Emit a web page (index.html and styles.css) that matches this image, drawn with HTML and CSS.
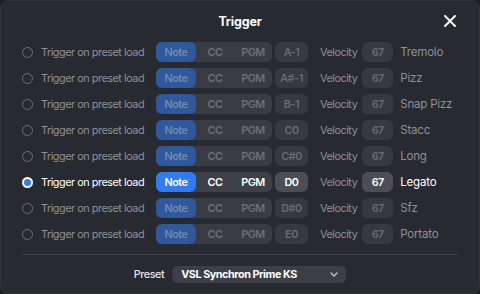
FILE: index.html
```
<!DOCTYPE html>
<html lang="en">
<head>
  <meta charset="UTF-8">
  <meta name="viewport" content="width=device-width, initial-scale=1.0">
  <title>Trigger</title>
  <link rel="stylesheet" href="styles.css">
</head>
<body>
  <div class="dialog">
    <div class="head">
      <h2>Trigger</h2>
      <button class="close" aria-label="Close">
        <svg width="12" height="12" viewBox="0 0 12 12"><path d="M1 1L11 11M11 1L1 11" stroke="#fff" stroke-width="1.9" stroke-linecap="round"/></svg>
      </button>
    </div>

    <div class="rows">
      <div class="row">
        <label class="check"><span class="radio"></span>Trigger on preset load</label>
        <div class="seg"><span class="on">Note</span><span>CC</span><span>PGM</span></div>
        <span class="box note">A-1</span>
        <span class="vel">Velocity</span>
        <span class="box num">67</span>
        <span class="name">Tremolo</span>
      </div>
      <div class="row">
        <label class="check"><span class="radio"></span>Trigger on preset load</label>
        <div class="seg"><span class="on">Note</span><span>CC</span><span>PGM</span></div>
        <span class="box note">A#-1</span>
        <span class="vel">Velocity</span>
        <span class="box num">67</span>
        <span class="name">Pizz</span>
      </div>
      <div class="row">
        <label class="check"><span class="radio"></span>Trigger on preset load</label>
        <div class="seg"><span class="on">Note</span><span>CC</span><span>PGM</span></div>
        <span class="box note">B-1</span>
        <span class="vel">Velocity</span>
        <span class="box num">67</span>
        <span class="name">Snap Pizz</span>
      </div>
      <div class="row">
        <label class="check"><span class="radio"></span>Trigger on preset load</label>
        <div class="seg"><span class="on">Note</span><span>CC</span><span>PGM</span></div>
        <span class="box note">C0</span>
        <span class="vel">Velocity</span>
        <span class="box num">67</span>
        <span class="name">Stacc</span>
      </div>
      <div class="row">
        <label class="check"><span class="radio"></span>Trigger on preset load</label>
        <div class="seg"><span class="on">Note</span><span>CC</span><span>PGM</span></div>
        <span class="box note">C#0</span>
        <span class="vel">Velocity</span>
        <span class="box num">67</span>
        <span class="name">Long</span>
      </div>
      <div class="row active">
        <label class="check"><span class="radio"></span>Trigger on preset load</label>
        <div class="seg"><span class="on">Note</span><span>CC</span><span>PGM</span></div>
        <span class="box note">D0</span>
        <span class="vel">Velocity</span>
        <span class="box num">67</span>
        <span class="name">Legato</span>
      </div>
      <div class="row">
        <label class="check"><span class="radio"></span>Trigger on preset load</label>
        <div class="seg"><span class="on">Note</span><span>CC</span><span>PGM</span></div>
        <span class="box note">D#0</span>
        <span class="vel">Velocity</span>
        <span class="box num">67</span>
        <span class="name">Sfz</span>
      </div>
      <div class="row">
        <label class="check"><span class="radio"></span>Trigger on preset load</label>
        <div class="seg"><span class="on">Note</span><span>CC</span><span>PGM</span></div>
        <span class="box note">E0</span>
        <span class="vel">Velocity</span>
        <span class="box num">67</span>
        <span class="name">Portato</span>
      </div>
    </div>

    <div class="foot">
      <span class="foot-label">Preset</span>
      <div class="select">
        <span>VSL Synchron Prime KS</span>
        <svg width="8" height="5" viewBox="0 0 8 5"><path d="M1 1L4 4L7 1" fill="none" stroke="#c9cbd0" stroke-width="1.3" stroke-linecap="round" stroke-linejoin="round"/></svg>
      </div>
    </div>
  </div>
</body>
</html>
```

FILE: styles.css
```
* {
  box-sizing: border-box;
}
body {
  margin: 0;
  background: #1c1e23;
  font-family: Inter, 'Noto Sans', sans-serif;
  font-size: 10.8px;
  letter-spacing: -0.45px;
  color: #8e9197;
}
.dialog {
  width: 480px;
  height: 294px;
  background: #272a31;
  border: 1px solid #30333a;
  border-radius: 8px;
  padding: 0 21px;
}
.head {
  height: 41px;
  display: flex;
  align-items: center;
  justify-content: center;
  position: relative;
}
h2 {
  margin: 0;
  color: #fff;
  font-size: 12.5px;
  font-weight: 700;
  letter-spacing: -0.2px;
}
.close {
  position: absolute;
  right: 1px;
  top: 13px;
  width: 14px;
  height: 14px;
  padding: 0;
  border: none;
  background: none;
  display: flex;
  align-items: center;
  justify-content: center;
}
.rows {
  display: flex;
  flex-direction: column;
  gap: 6px;
}
.row {
  display: flex;
  align-items: center;
  height: 20px;
  white-space: nowrap;
}
.row > * {
  flex-shrink: 0;
}
.check {
  width: 134px;
  display: flex;
  align-items: center;
  gap: 8px;
}
.radio {
  width: 11px;
  height: 11px;
  border-radius: 50%;
  border: 1.5px solid #6d7076;
}
.seg {
  width: 116px;
  height: 20px;
  display: flex;
  background: #393c42;
  border-radius: 6px;
  color: #6c6f75;
  font-weight: 600;
}
.seg span {
  display: flex;
  align-items: center;
  justify-content: center;
  width: 38px;
}
.seg span.on {
  width: 40px;
  background: #30589c;
  color: #7088b0;
  border-radius: 6px;
}
.box {
  height: 20px;
  display: flex;
  align-items: center;
  justify-content: center;
  background: #37393f;
  border-radius: 6px;
  color: #686b71;
  font-weight: 600;
}
.note {
  width: 33px;
  margin-left: 3px;
}
.vel {
  margin-left: 12px;
}
.num {
  width: 31px;
  margin-left: 5px;
}
.name {
  margin-left: 7px;
  font-size: 11.5px;
  letter-spacing: -0.2px;
}
.row.active .check,
.row.active .name {
  color: #fff;
}
.row.active .radio {
  border: 2px solid #fff;
  background: #2f7cf6;
}
.row.active .seg {
  background: #3d4047;
  color: #fff;
}
.row.active .seg span.on {
  background: #2f7cf6;
  color: #fff;
}
.row.active .box {
  background: #4b4e55;
  color: #fff;
}
.foot {
  margin-top: 10px;
  border-top: 1px solid #3c3f46;
  height: 40px;
  display: flex;
  align-items: center;
  justify-content: center;
  gap: 8px;
}
.foot-label {
  color: #e4e5e8;
  font-weight: 500;
}
.select {
  width: 174px;
  height: 17px;
  background: #3c3f46;
  border-radius: 5px;
  display: flex;
  align-items: center;
  justify-content: space-between;
  padding: 0 8px 0 9px;
  color: #fff;
  font-weight: 700;
}
```
